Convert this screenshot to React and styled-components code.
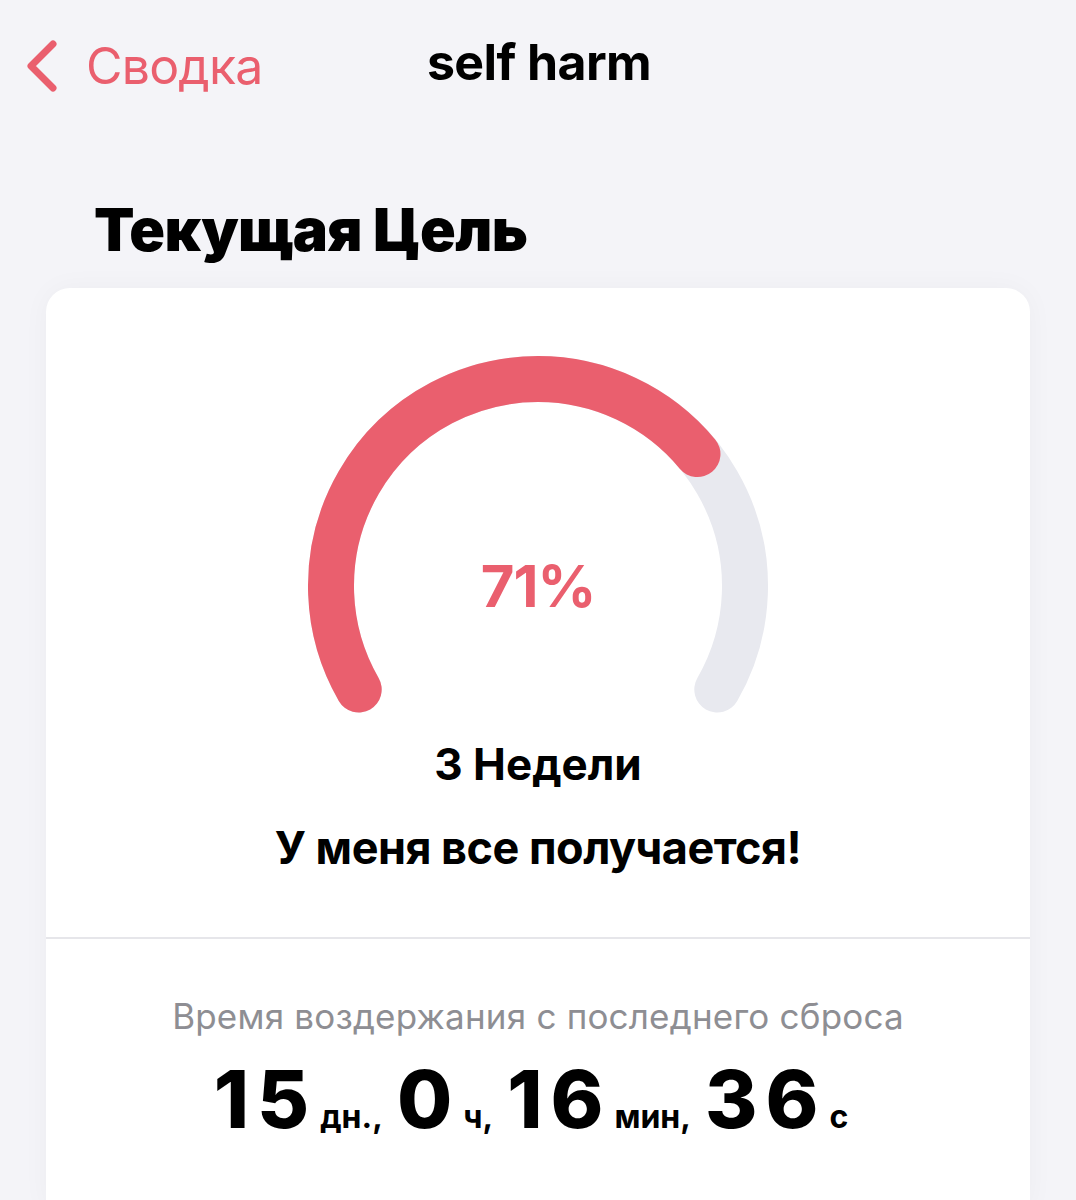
import styled, { createGlobalStyle } from "styled-components";

const GlobalStyle = createGlobalStyle`
  html, body {
    margin: 0;
    padding: 0;
    background: #f4f4f8;
  }
  body {
    font-family: Inter, "Noto Sans", sans-serif;
    -webkit-font-smoothing: antialiased;
  }
`;

const RED = "#ea5f6e";

export default function App() {
  const percent = 71;

  return (
    <Page>
      <GlobalStyle />
      <NavBar>
        <BackButton type="button">
          <svg width="36" height="54" viewBox="0 0 36 54">
            <path
              d="M29 5 L7 27 L29 49"
              fill="none"
              stroke={RED}
              strokeWidth="7"
              strokeLinecap="round"
              strokeLinejoin="round"
            />
          </svg>
          <BackLabel>Сводка</BackLabel>
        </BackButton>
        <NavTitle>self harm</NavTitle>
      </NavBar>

      <SectionTitle>Текущая Цель</SectionTitle>

      <Card>
        <GoalSection>
          <Gauge>
            <svg width="480" height="370" viewBox="0 0 480 370">
              <path
                d="M60.7 343.5 A207 207 0 1 1 419.3 343.5"
                fill="none"
                stroke="#e8e9ef"
                strokeWidth="46"
                strokeLinecap="round"
              />
              <path
                d="M60.7 343.5 A207 207 0 1 1 419.3 343.5"
                fill="none"
                stroke={RED}
                strokeWidth="46"
                strokeLinecap="round"
                pathLength="100"
                strokeDasharray={`${percent} 200`}
              />
            </svg>
            <GaugeValue>{percent}%</GaugeValue>
          </Gauge>
          <GoalName>3 Недели</GoalName>
          <GoalMotto>У меня все получается!</GoalMotto>
        </GoalSection>

        <TimerSection>
          <TimerCaption>Время воздержания с последнего сброса</TimerCaption>
          <TimerRow>
            <Num>15</Num>
            <Unit>дн.,</Unit>
            <Num>0</Num>
            <Unit>ч,</Unit>
            <Num>16</Num>
            <Unit>мин,</Unit>
            <Num>36</Num>
            <Unit>с</Unit>
          </TimerRow>
        </TimerSection>
      </Card>
    </Page>
  );
}

const Page = styled.main`
  width: 1076px;
  min-height: 1200px;
  background: #f4f4f8;
  padding: 0 46px;
  box-sizing: border-box;
  overflow: hidden;
`;

const NavBar = styled.header`
  position: relative;
  height: 128px;
  display: flex;
  align-items: center;
  justify-content: center;
  margin: 0 -46px;
`;

const BackButton = styled.button`
  position: absolute;
  left: 24px;
  top: 36px;
  display: flex;
  align-items: center;
  gap: 26px;
  background: none;
  border: none;
  padding: 0;
  cursor: pointer;
`;

const BackLabel = styled.span`
  font-family: Inter, sans-serif;
  font-size: 50px;
  font-weight: 400;
  color: ${RED};
  letter-spacing: -0.8px;
`;

const NavTitle = styled.h1`
  margin: 0 0 0 2px;
  font-family: Inter, sans-serif;
  font-size: 50px;
  font-weight: 700;
  color: #000;
  letter-spacing: -0.6px;
  transform: translateY(-2px);
`;

const SectionTitle = styled.h2`
  margin: 72px 0 29px 48px;
  font-family: Inter, sans-serif;
  font-size: 59px;
  font-weight: 900;
  line-height: 1;
  color: #000;
  letter-spacing: -0.6px;
`;

const Card = styled.section`
  background: #fff;
  border-radius: 24px 24px 0 0;
  box-shadow: 0 0 28px rgba(0, 0, 0, 0.035);
  min-height: 920px;
`;

const GoalSection = styled.div`
  display: flex;
  flex-direction: column;
  align-items: center;
  padding: 58px 0 62px;
  border-bottom: 2px solid #e6e6ea;
`;

const Gauge = styled.div`
  position: relative;
  width: 480px;
  height: 370px;
  svg {
    display: block;
  }
`;

const GaugeValue = styled.div`
  position: absolute;
  left: 0;
  right: 0;
  top: 211px;
  text-align: center;
  font-family: Inter, sans-serif;
  font-size: 58px;
  font-weight: 700;
  color: ${RED};
  line-height: 1;
  letter-spacing: -1px;
`;

const GoalName = styled.div`
  margin-top: 22px;
  font-family: Inter, sans-serif;
  font-size: 44px;
  font-weight: 700;
  line-height: 1.2;
  color: #000;
`;

const GoalMotto = styled.div`
  margin-top: 30px;
  font-family: Inter, sans-serif;
  font-size: 45px;
  font-weight: 700;
  line-height: 1.2;
  color: #000;
  letter-spacing: -0.5px;
`;

const TimerSection = styled.div`
  display: flex;
  flex-direction: column;
  align-items: center;
  padding-top: 56px;
`;

const TimerCaption = styled.div`
  font-family: Inter, sans-serif;
  font-size: 35px;
  font-weight: 400;
  color: #8e8e93;
  line-height: 1.2;
  letter-spacing: 0.2px;
`;

const TimerRow = styled.div`
  display: flex;
  align-items: baseline;
  margin-top: 18px;
`;

const Num = styled.span`
  font-family: Inter, sans-serif;
  font-size: 80px;
  font-weight: 800;
  color: #000;
  line-height: 1.1;
  letter-spacing: 8px;
  margin-right: 3px;
`;

const Unit = styled.span`
  font-family: Inter, sans-serif;
  font-size: 32px;
  font-weight: 700;
  color: #000;
  margin-right: 14px;
`;
